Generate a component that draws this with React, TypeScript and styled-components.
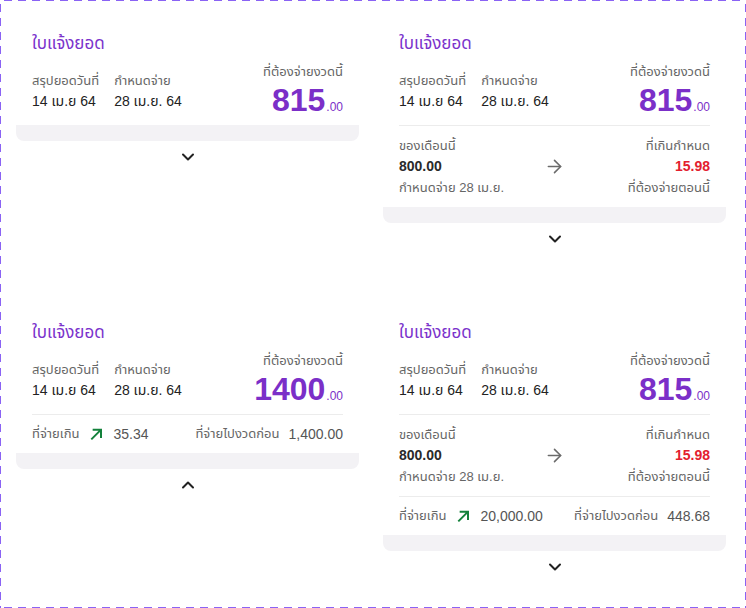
import React from "react";
import styled, { createGlobalStyle } from "styled-components";
import { ArrowRight, ChevronDown, ChevronUp } from "lucide-react";

const Global = createGlobalStyle`
  html, body { margin: 0; padding: 0; background: #fff; }
  body { font-family: "Liberation Sans", "Noto Sans Thai", "Noto Sans", sans-serif; color: #222; }
  * { box-sizing: border-box; }
`;

const dash = "#8a63f4";

const Frame = styled.div`
  width: 746px;
  height: 608px;
  padding: 16px;
  display: grid;
  grid-template-columns: 343px 343px;
  column-gap: 24px;
  row-gap: 50px;
  align-content: start;
  align-items: start;
  background-image:
    repeating-linear-gradient(90deg, ${dash} 0 8px, transparent 8px 14px),
    repeating-linear-gradient(90deg, ${dash} 0 8px, transparent 8px 14px),
    repeating-linear-gradient(180deg, ${dash} 0 8px, transparent 8px 14px),
    repeating-linear-gradient(180deg, ${dash} 0 8px, transparent 8px 14px);
  background-size: 100% 1px, 100% 1px, 1px 100%, 1px 100%;
  background-position: 4px 0, 4px 100%, 0 4px, 100% 4px;
  background-repeat: no-repeat;
`;

const Card = styled.div`
  display: flex;
  flex-direction: column;
`;

const Body = styled.div`
  padding: 16px 16px 0;
`;

const Title = styled.div`
  font-size: 17px;
  line-height: 24px;
  color: #7b33cc;
  margin-bottom: 4px;
`;

const Header = styled.div`
  display: flex;
  justify-content: space-between;
  align-items: flex-end;
  height: 65px;
`;

const Dates = styled.div`
  display: flex;
  gap: 15px;
  padding-bottom: 14px;
`;

const Col = styled.div<{ $right?: boolean }>`
  display: flex;
  flex-direction: column;
  align-items: ${(p) => (p.$right ? "flex-end" : "flex-start")};
`;

const Label = styled.div`
  font-size: 13px;
  line-height: 20px;
  color: #666;
  white-space: nowrap;
`;

const Value = styled.div`
  font-size: 14px;
  line-height: 20px;
  color: #222;
  white-space: nowrap;
`;

const Amount = styled.div`
  font-size: 32px;
  line-height: 36px;
  font-weight: 700;
  color: #7b2fc8;
  white-space: nowrap;
`;

const Cents = styled.span`
  font-size: 12px;
  font-weight: 400;
  margin-left: 1px;
`;

const Section = styled.div`
  border-top: 1px solid #ececec;
  display: grid;
  grid-template-columns: 1fr auto 1fr;
  align-items: center;
  padding: 9px 0 10px;
  height: 82px;
`;

const Line = styled.div<{ $tone?: "strong" | "red" | "muted" }>`
  font-size: ${(p) => (p.$tone === "muted" ? "13px" : "14px")};
  line-height: 21px;
  font-weight: ${(p) => (p.$tone === "strong" || p.$tone === "red" ? 700 : 400)};
  color: ${(p) =>
    p.$tone === "strong" ? "#2a2a2a" : p.$tone === "red" ? "#e3202e" : "#666"};
  white-space: nowrap;
`;

const ArrowBox = styled.div`
  display: flex;
  color: #6b6b6b;
`;

const Stats = styled.div`
  border-top: 1px solid #ececec;
  height: 39px;
  display: flex;
  align-items: center;
  justify-content: space-between;
  font-size: 14px;
  color: #666;
`;

const Stat = styled.div`
  display: flex;
  align-items: center;
  gap: 9px;
  white-space: nowrap;
`;

const StatLabel = styled.span`
  font-size: 13px;
  color: #666;
`;

const StatValue = styled.span`
  font-size: 14px;
  color: #555;
`;

const Bar = styled.div`
  height: 16px;
  background: #f3f2f5;
  border-radius: 0 0 8px 8px;
`;

const Toggle = styled.div`
  height: 32px;
  display: flex;
  align-items: center;
  justify-content: center;
  color: #222;
`;

const UpRight = () => (
  <svg width="16" height="16" viewBox="0 0 24 24" fill="#13813b">
    <path d="M7 4v3h8.9L3.9 19 6 21.1 18 9.1V18h3V4z" />
  </svg>
);

type CardProps = {
  amount: string;
  due?: boolean;
  stats?: { over: string; prev: string };
  open?: boolean;
};

function Statement({ amount, due, stats, open }: CardProps) {
  return (
    <Card>
      <Body>
        <Title>ใบแจ้งยอด</Title>
        <Header>
          <Dates>
            <Col>
              <Label>สรุปยอดวันที่</Label>
              <Value>14 เม.ย 64</Value>
            </Col>
            <Col>
              <Label>กำหนดจ่าย</Label>
              <Value>28 เม.ย. 64</Value>
            </Col>
          </Dates>
          <Col $right>
            <Label>ที่ต้องจ่ายงวดนี้</Label>
            <Amount>
              {amount}
              <Cents>.00</Cents>
            </Amount>
          </Col>
        </Header>
        {due && (
          <Section>
            <Col>
              <Line $tone="muted">ของเดือนนี้</Line>
              <Line $tone="strong">800.00</Line>
              <Line $tone="muted">กำหนดจ่าย 28 เม.ย.</Line>
            </Col>
            <ArrowBox>
              <ArrowRight size={21} strokeWidth={1.8} />
            </ArrowBox>
            <Col $right>
              <Line $tone="muted">ที่เกินกำหนด</Line>
              <Line $tone="red">15.98</Line>
              <Line $tone="muted">ที่ต้องจ่ายตอนนี้</Line>
            </Col>
          </Section>
        )}
        {stats && (
          <Stats>
            <Stat>
              <StatLabel>ที่จ่ายเกิน</StatLabel>
              <UpRight />
              <StatValue>{stats.over}</StatValue>
            </Stat>
            <Stat>
              <StatLabel>ที่จ่ายไปงวดก่อน</StatLabel>
              <StatValue>{stats.prev}</StatValue>
            </Stat>
          </Stats>
        )}
      </Body>
      <Bar />
      <Toggle>{open ? <ChevronUp size={20} strokeWidth={2.4} /> : <ChevronDown size={20} strokeWidth={2.4} />}</Toggle>
    </Card>
  );
}

export default function App() {
  return (
    <>
      <Global />
      <Frame>
        <Statement amount="815" />
        <Statement amount="815" due />
        <Statement amount="1400" stats={{ over: "35.34", prev: "1,400.00" }} open />
        <Statement amount="815" due stats={{ over: "20,000.00", prev: "448.68" }} />
      </Frame>
    </>
  );
}
